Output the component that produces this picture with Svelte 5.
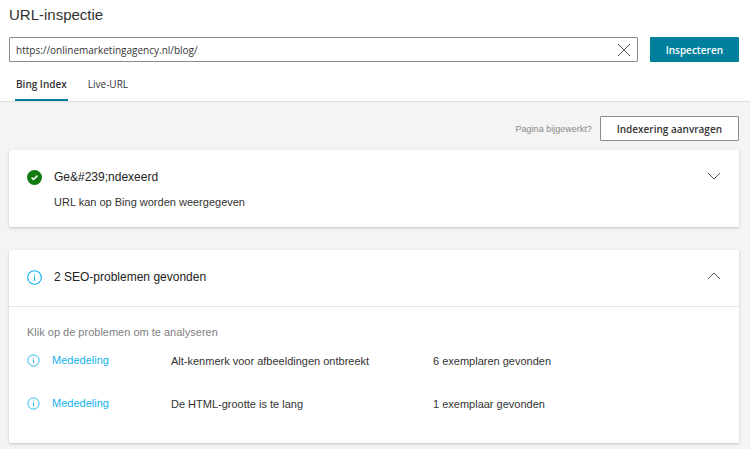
<script lang="ts">
	type Issue = {
		severity: string
		description: string
		pages: string
	}

	let url = 'https://onlinemarketingagency.nl/blog/'
	let tab: 'Bing Index' | 'Live-URL' = 'Bing Index'
	let indexOpen = false
	let issuesOpen = true

	const tabs: ('Bing Index' | 'Live-URL')[] = ['Bing Index', 'Live-URL']

	const issues: Issue[] = [
		{severity: 'Mededeling', description: 'Alt-kenmerk voor afbeeldingen ontbreekt', pages: '6 exemplaren gevonden'},
		{severity: 'Mededeling', description: 'De HTML-grootte is te lang', pages: '1 exemplaar gevonden'}
	]
</script>

<div class="page">
	<header>
		<h1>URL-inspectie</h1>
		<form class="search" on:submit|preventDefault>
			<div class="field">
				<input type="text" aria-label="URL" spellcheck="false" bind:value={url}>
				<button type="button" class="clear" aria-label="Wissen" on:click={_ => url = ''}>
					<svg width="14" height="14" viewBox="0 0 14 14"><path d="M1 1L13 13M13 1L1 13" /></svg>
				</button>
			</div>
			<button class="primary">Inspecteren</button>
		</form>
		<nav>
			{#each tabs as name}
				<button class="tab" class:active={tab === name} on:click={_ => tab = name}>{name}</button>
			{/each}
		</nav>
	</header>

	<main>
		<div class="actions">
			<span>Pagina bijgewerkt?</span>
			<button class="secondary">Indexering aanvragen</button>
		</div>

		<section class="card status">
			<div class="card-head">
				<svg width="15" height="15" viewBox="0 0 15 15">
					<circle cx="7.5" cy="7.5" r="7.5" fill="#107c10" />
					<path d="M4.6 7.7L6.5 9.5L10.4 5.6" fill="none" stroke="white" stroke-width="1.6" />
				</svg>
				<h2>{'Ge&#239;ndexeerd'}</h2>
				<button class="toggle" aria-label="Details" aria-expanded={indexOpen} on:click={_ => indexOpen = !indexOpen}>
					<svg class:flipped={indexOpen} width="14" height="8" viewBox="0 0 14 8"><path d="M1 1L7 7L13 1" /></svg>
				</button>
			</div>
			<p>URL kan op Bing worden weergegeven</p>
		</section>

		<section class="card">
			<div class="card-head tall">
				<svg width="15" height="15" viewBox="0 0 15 15">
					<circle cx="7.5" cy="7.5" r="6.8" fill="none" stroke="#12b2ee" stroke-width="1.1" />
					<path d="M7.5 6.3V11M7.5 4V5.2" fill="none" stroke="#12b2ee" stroke-width="1.1" />
				</svg>
				<h2>2 SEO-problemen gevonden</h2>
				<button class="toggle" aria-label="Details" aria-expanded={issuesOpen} on:click={_ => issuesOpen = !issuesOpen}>
					<svg class:flipped={issuesOpen} width="14" height="8" viewBox="0 0 14 8"><path d="M1 1L7 7L13 1" /></svg>
				</button>
			</div>
			{#if issuesOpen}
				<div class="issues">
					<p class="hint">Klik op de problemen om te analyseren</p>
					<table>
						<tbody>
							{#each issues as issue}
								<tr>
									<td class="severity">
										<button>
											<svg width="13" height="13" viewBox="0 0 13 13">
												<circle cx="6.5" cy="6.5" r="5.6" fill="none" stroke="#12b2ee" stroke-width="0.9" />
												<path d="M6.5 5.6V9.3M6.5 3.7V4.7" fill="none" stroke="#12b2ee" stroke-width="0.9" />
											</svg>
											{issue.severity}
										</button>
									</td>
									<td class="description">{issue.description}</td>
									<td>{issue.pages}</td>
								</tr>
							{/each}
						</tbody>
					</table>
				</div>
			{/if}
		</section>
	</main>
</div>

<style>
	:global(body) {
		background: #f4f4f4;
	}
	.page {
		font-family: "Liberation Sans", Arial, sans-serif;
		font-size: 11px;
		line-height: 16px;
		color: #333;
	}
	h1, h2, p {
		margin: 0;
		font-weight: normal;
	}
	button {
		font: inherit;
		color: inherit;
		background: none;
		border: none;
		padding: 0;
		cursor: pointer;
	}
	svg {
		display: block;
	}
	header {
		background: white;
		border-bottom: 1px solid #dedede;
		padding: 5px 11px 0 9px;
	}
	h1 {
		font-size: 15px;
		line-height: 20px;
	}
	.search {
		display: flex;
		gap: 12px;
		margin-top: 12px;
	}
	.field {
		flex: 1;
		display: flex;
		align-items: center;
		height: 25px;
		box-sizing: border-box;
		border: 1px solid #8c8c8c;
		border-radius: 1px;
	}
	input {
		flex: 1;
		min-width: 0;
		border: none;
		outline: none;
		background: none;
		padding: 0 6px;
		font: 10px "Open Sans", "Segoe UI", sans-serif;
		color: #333;
	}
	.clear {
		padding: 0 6px;
	}
	.clear path, .toggle path {
		fill: none;
		stroke: #555;
		stroke-width: 1;
	}
	.primary, .secondary {
		font: 600 10px "Open Sans", "Segoe UI", sans-serif;
		height: 25px;
		padding: 0 16px;
		border-radius: 1px;
	}
	.primary {
		background: #00809d;
		color: white;
	}
	.secondary {
		background: white;
		border: 1px solid #8c8c8c;
	}
	nav {
		display: flex;
		gap: 19px;
		padding: 12px 6px 0;
	}
	.tab {
		font: 10px "Open Sans", "Segoe UI", sans-serif;
		height: 27px;
		padding: 0 1px 5px;
		border-bottom: 2px solid transparent;
	}
	.tab.active {
		font-weight: 600;
		border-color: #00809d;
	}
	main {
		display: flex;
		flex-direction: column;
		padding: 14px 11px 6px 9px;
	}
	.actions {
		display: flex;
		justify-content: flex-end;
		align-items: center;
		gap: 8px;
		margin-bottom: 9px;
	}
	.actions span {
		font-size: 9px;
		color: #8a8a8a;
	}
	.card {
		background: white;
		border-radius: 2px;
		box-shadow: 0 1px 3px rgba(0, 0, 0, 0.2);
	}
	.card + .card {
		margin-top: 23px;
	}
	.card-head {
		display: flex;
		align-items: center;
		gap: 12px;
		padding: 0 18px;
	}
	.card-head.tall {
		padding: 19px 18px 21px;
	}
	h2 {
		flex: 1;
		font-size: 12px;
		color: #222;
	}
	.status {
		padding: 19px 0 17px;
	}
	.status p {
		padding: 9px 45px 0;
	}
	.toggle {
		padding-bottom: 3px;
	}
	.flipped {
		transform: scaleY(-1);
	}
	.issues {
		border-top: 1px solid #e6e6e6;
		padding: 17px 18px 11px;
	}
	.hint {
		color: #808080;
		margin-bottom: 6px;
	}
	table {
		width: 100%;
		border-collapse: collapse;
		table-layout: fixed;
	}
	td {
		padding: 7px 0 20px;
		vertical-align: top;
	}
	.severity {
		width: 144px;
		padding-top: 6px;
	}
	.severity button {
		display: flex;
		align-items: center;
		gap: 12px;
		color: #12b2ee;
	}
	.description {
		width: 262px;
	}
</style>
